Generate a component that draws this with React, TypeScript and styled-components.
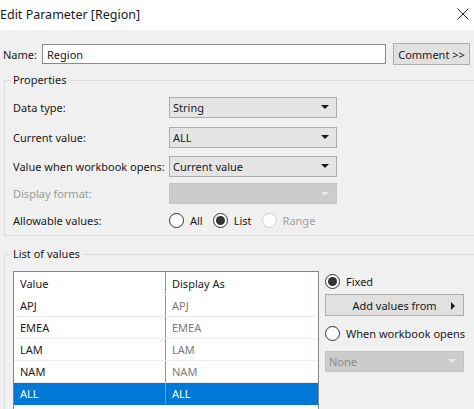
import React from "react";
import styled, { createGlobalStyle } from "styled-components";

const Global = createGlobalStyle`
  html, body {
    margin: 0;
    padding: 0;
    background: #f0f0f0;
  }
  * {
    box-sizing: border-box;
  }
`;

interface DisabledProps {
  disabled?: boolean;
}

interface RowProps {
  h: number;
}

interface CellProps {
  muted?: boolean;
  selected?: boolean;
}

const Window = styled.div`
  width: 474px;
  height: 409px;
  overflow: hidden;
  background: #f0f0f0;
  font: 11px "Noto Sans", "Open Sans", sans-serif;
  color: #1a1a1a;
  white-space: nowrap;
`;

const TitleBar = styled.header`
  height: 30px;
  background: #ffffff;
  display: flex;
  align-items: center;
  justify-content: space-between;
  padding: 0 0 2px 0;
`;

const Title = styled.h1`
  margin: 0;
  font: 12.5px "Noto Sans", "Open Sans", sans-serif;
  color: #1a1a1a;
`;

const Close = styled.div`
  width: 30px;
  height: 30px;
  display: flex;
  align-items: center;
  justify-content: center;
  margin-right: -4px;
`;

const NameRow = styled.div`
  display: flex;
  align-items: center;
  padding: 13px 0 0 3px;
  height: 35px;
`;

const NameLabel = styled.span`
  width: 39px;
`;

const TextInput = styled.div`
  width: 344px;
  height: 20px;
  border: 1px solid #8a8a8a;
  background: #ffffff;
  padding: 0 4px;
  display: flex;
  align-items: center;
`;

const Button = styled.div<{ w: number }>`
  width: ${({ w }) => w}px;
  height: 22px;
  background: #e1e1e1;
  border: 1px solid #adadad;
  display: flex;
  align-items: center;
  justify-content: center;
  position: relative;
`;

const Group = styled.fieldset<{ h: number; top: number }>`
  margin: ${({ top }) => top}px 0 0 4px;
  width: 520px;
  height: ${({ h }) => h}px;
  border: 1px solid #dcdcdc;
  padding: 0;
`;

const Legend = styled.legend`
  padding: 0 2px;
  margin-left: 6px;
  font-size: 11px;
  line-height: 14px;
`;

const PropRows = styled.div`
  display: flex;
  flex-direction: column;
  padding: 5px 0 0 8px;
`;

const Row = styled.div<RowProps>`
  display: flex;
  align-items: center;
  height: ${({ h }) => h}px;
`;

const Label = styled.span<DisabledProps>`
  width: 156px;
  color: ${({ disabled }) => (disabled ? "#9a9a9a" : "#1a1a1a")};
`;

const Select = styled.div<DisabledProps & { w: number }>`
  width: ${({ w }) => w}px;
  height: 21px;
  background: ${({ disabled }) => (disabled ? "#cccccc" : "#e5e5e5")};
  border: 1px solid ${({ disabled }) => (disabled ? "#c4c4c4" : "#acacac")};
  color: ${({ disabled }) => (disabled ? "#8a8a8a" : "#1a1a1a")};
  display: flex;
  align-items: center;
  justify-content: space-between;
  padding: 0 7px 0 3px;
`;

const Caret = styled.span<DisabledProps>`
  width: 0;
  height: 0;
  border-left: 4px solid transparent;
  border-right: 4px solid transparent;
  border-top: 4px solid ${({ disabled }) => (disabled ? "#e8e8e8" : "#1a1a1a")};
`;

const RightCaret = styled.span`
  position: absolute;
  right: 8px;
  top: 7px;
  width: 0;
  height: 0;
  border-top: 4px solid transparent;
  border-bottom: 4px solid transparent;
  border-left: 4px solid #1a1a1a;
`;

const RadioGroup = styled.div`
  display: flex;
  align-items: center;
  gap: 10px;
`;

const RadioItem = styled.label<DisabledProps>`
  display: flex;
  align-items: center;
  gap: 6px;
  color: ${({ disabled }) => (disabled ? "#a0a0a0" : "#1a1a1a")};
`;

const Circle = styled.span<DisabledProps & { checked?: boolean }>`
  width: 15px;
  height: 15px;
  border-radius: 50%;
  border: 1px solid ${({ disabled }) => (disabled ? "#cccccc" : "#333333")};
  background: #ffffff;
  display: flex;
  align-items: center;
  justify-content: center;
  flex-shrink: 0;

  &::after {
    content: "";
    width: 9px;
    height: 9px;
    border-radius: 50%;
    background: #333333;
    display: ${({ checked }) => (checked ? "block" : "none")};
  }
`;

const ListBody = styled.div`
  display: flex;
  padding: 10px 0 0 8px;
  gap: 6px;
`;

const Table = styled.div`
  width: 306px;
  height: 150px;
  background: #ffffff;
  border: 1px solid #828790;
  border-bottom: none;
`;

const TRow = styled.div<{ h: number; selected?: boolean; line?: boolean }>`
  display: grid;
  grid-template-columns: 151px 1fr;
  height: ${({ h }) => h}px;
  background: ${({ selected }) => (selected ? "#0078d7" : "transparent")};
  border-bottom: 1px solid
    ${({ line }) => (line ? "#ececec" : "transparent")};
`;

const Cell = styled.div<CellProps>`
  display: flex;
  align-items: center;
  padding-left: 6px;
  color: ${({ selected, muted }) =>
    selected ? "#ffffff" : muted ? "#7a7a7a" : "#1a1a1a"};
  & + & {
    border-left: 1px solid ${({ selected }) => (selected ? "#5aa0e0" : "#e3e3e3")};
  }
`;

const Side = styled.div`
  display: flex;
  flex-direction: column;
  padding-top: 1px;
`;

const SideRow = styled.div<RowProps>`
  display: flex;
  align-items: center;
  height: ${({ h }) => h}px;
`;

const values = ["APJ", "EMEA", "LAM", "NAM", "ALL"];

export default function App() {
  return (
    <Window>
      <Global />
      <TitleBar>
        <Title>Edit Parameter [Region]</Title>
        <Close>
          <svg width="12" height="12" viewBox="0 0 12 12">
            <path d="M0.5 0.5 L11.5 11.5 M11.5 0.5 L0.5 11.5" stroke="#222" strokeWidth="1" />
          </svg>
        </Close>
      </TitleBar>

      <NameRow>
        <NameLabel>Name:</NameLabel>
        <TextInput>Region</TextInput>
        <span style={{ width: 7 }} />
        <Button w={77}>Comment &gt;&gt;</Button>
      </NameRow>

      <Group h={163} top={8}>
        <Legend>Properties</Legend>
        <PropRows>
          <Row h={30}>
            <Label>Data type:</Label>
            <Select w={168}>
              String
              <Caret />
            </Select>
          </Row>
          <Row h={30}>
            <Label>Current value:</Label>
            <Select w={168}>
              ALL
              <Caret />
            </Select>
          </Row>
          <Row h={28}>
            <Label>Value when workbook opens:</Label>
            <Select w={168}>
              Current value
              <Caret />
            </Select>
          </Row>
          <Row h={27}>
            <Label disabled>Display format:</Label>
            <Select w={168} disabled>
              <span />
              <Caret disabled />
            </Select>
          </Row>
          <Row h={26}>
            <Label>Allowable values:</Label>
            <RadioGroup>
              <RadioItem>
                <Circle />
                All
              </RadioItem>
              <RadioItem>
                <Circle checked />
                List
              </RadioItem>
              <RadioItem disabled>
                <Circle disabled />
                Range
              </RadioItem>
            </RadioGroup>
          </Row>
        </PropRows>
      </Group>

      <Group h={200} top={11}>
        <Legend>List of values</Legend>
        <ListBody>
          <Table>
            <TRow h={23}>
              <Cell>Value</Cell>
              <Cell>Display As</Cell>
            </TRow>
            {values.map((v, i) => {
              const sel = v === "ALL";
              return (
                <TRow key={v} h={22} selected={sel} line={!sel && i < values.length - 1}>
                  <Cell selected={sel}>{v}</Cell>
                  <Cell selected={sel} muted>
                    {v}
                  </Cell>
                </TRow>
              );
            })}
          </Table>
          <Side>
            <SideRow h={18}>
              <RadioItem>
                <Circle checked />
                Fixed
              </RadioItem>
            </SideRow>
            <SideRow h={30}>
              <Button w={139}>
                Add values from
                <RightCaret />
              </Button>
            </SideRow>
            <SideRow h={26}>
              <RadioItem>
                <Circle />
                When workbook opens
              </RadioItem>
            </SideRow>
            <SideRow h={30}>
              <Select w={139} disabled>
                None
                <Caret disabled />
              </Select>
            </SideRow>
          </Side>
        </ListBody>
      </Group>
    </Window>
  );
}
